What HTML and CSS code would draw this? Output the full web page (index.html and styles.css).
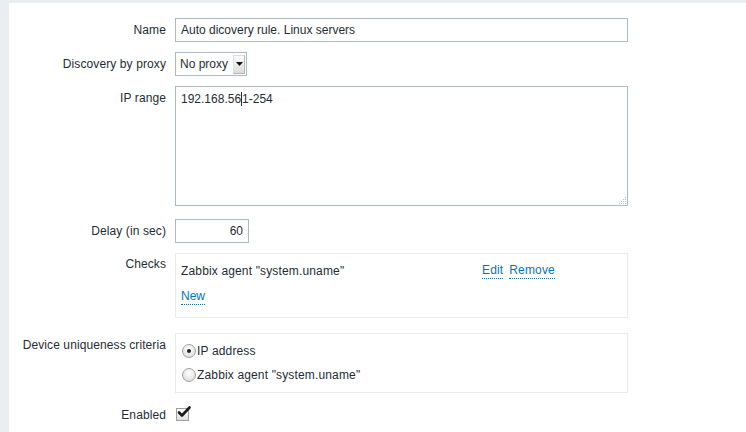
FILE: index.html
```html
<!DOCTYPE html>
<html>
<head>
<meta charset="utf-8">
<link rel="stylesheet" href="styles.css">
</head>
<body>
<div class="page">
  <div class="form">
    <div class="row">
      <div class="label">Name</div>
      <div class="field"><div class="input wide">Auto dicovery rule. Linux servers</div></div>
    </div>
    <div class="row">
      <div class="label">Discovery by proxy</div>
      <div class="field">
        <div class="select"><span class="sel-text">No proxy</span><span class="sel-btn"><svg width="7" height="4" viewBox="0 0 7 4"><path d="M0 0H7L3.5 4Z" fill="#111"/></svg></span></div>
      </div>
    </div>
    <div class="row">
      <div class="label">IP range</div>
      <div class="field">
        <div class="textarea">192.168.56<span class="caret"></span>1-254
          <svg class="grip" width="9" height="9" viewBox="0 0 9 9"><g fill="#b9c2c6"><rect x="7" y="1" width="1" height="1"/><rect x="5" y="3" width="1" height="1"/><rect x="7" y="3" width="1" height="1"/><rect x="3" y="5" width="1" height="1"/><rect x="5" y="5" width="1" height="1"/><rect x="7" y="5" width="1" height="1"/><rect x="1" y="7" width="1" height="1"/><rect x="3" y="7" width="1" height="1"/><rect x="5" y="7" width="1" height="1"/><rect x="7" y="7" width="1" height="1"/></g></svg>
        </div>
      </div>
    </div>
    <div class="row delay-row">
      <div class="label">Delay (in sec)</div>
      <div class="field"><div class="input small">60</div></div>
    </div>
    <div class="row">
      <div class="label checks-label">Checks</div>
      <div class="field">
        <div class="box checks">
          <div class="check-line"><span class="check-name">Zabbix agent "system.uname"</span><a class="link">Edit</a><a class="link">Remove</a></div>
          <div class="check-new"><a class="link">New</a></div>
        </div>
      </div>
    </div>
    <div class="row device-row">
      <div class="label">Device uniqueness criteria</div>
      <div class="field">
        <div class="box radios">
          <div class="radio-line"><span class="radio on"></span>IP address</div>
          <div class="radio-line"><span class="radio"></span>Zabbix agent "system.uname"</div>
        </div>
      </div>
    </div>
    <div class="row">
      <div class="label">Enabled</div>
      <div class="field">
        <span class="checkbox"><svg width="16" height="14" viewBox="0 0 16 14"><path d="M3 7.5 L6 10.5 L13.5 2.5" stroke="#1a1a1a" stroke-width="2.6" fill="none" stroke-linecap="round" stroke-linejoin="round"/></svg></span>
      </div>
    </div>
  </div>
</div>
</body>
</html>
```
FILE: styles.css
```css
html, body {
  margin: 0;
  padding: 0;
}
body {
  background: #ebeef0;
  font-family: "Liberation Sans", Arial, sans-serif;
  font-size: 12px;
  color: #1f2c33;
  width: 746px;
  height: 432px;
  overflow: hidden;
}
.page {
  margin: 3px 0 0 9px;
  background: #ffffff;
  height: 429px;
  padding-top: 15px;
  box-sizing: border-box;
}
.form {
  display: flex;
  flex-direction: column;
  gap: 10px;
}
.row {
  display: grid;
  grid-template-columns: 157px 1fr;
  column-gap: 9px;
}
.delay-row { margin-top: 3px; }
.device-row { margin-top: 5px; }
.label {
  text-align: right;
  line-height: 24px;
  white-space: nowrap;
  letter-spacing: 0.1px;
}
.checks-label { line-height: 22px; }
.field {
  display: flex;
  align-items: flex-start;
}
.input {
  box-sizing: border-box;
  height: 24px;
  line-height: 22px;
  border: 1px solid #acbbc0;
  padding: 0 5px;
  background: #fff;
  white-space: nowrap;
}
.wide { width: 453px; }
.small { width: 74px; text-align: right; }
.select {
  box-sizing: border-box;
  display: inline-flex;
  align-items: center;
  height: 24px;
  width: 72px;
  border: 1px solid #acbbc0;
  padding: 0 1px 0 4px;
  background: #fff;
}
.sel-text { flex: 1; }
.sel-btn {
  box-sizing: border-box;
  width: 12px;
  height: 19px;
  border: 1px solid #b5b5b5;
  border-left-color: #ddd;
  border-top-color: #ddd;
  background: linear-gradient(#fbfbfb, #dcdcdc);
  display: flex;
  align-items: center;
  justify-content: center;
}
.textarea {
  position: relative;
  box-sizing: border-box;
  width: 453px;
  height: 120px;
  border: 1px solid #acbbc0;
  padding: 4px 5px;
  line-height: 16px;
  background: #fff;
}
.caret {
  display: inline-block;
  width: 1px;
  height: 14px;
  background: #1f2c33;
  vertical-align: -3px;
}
.grip {
  position: absolute;
  right: 0;
  bottom: 0;
}
.box {
  box-sizing: border-box;
  width: 453px;
  border: 1px solid #ebebeb;
  background: #fff;
}
.checks {
  height: 65px;
  padding: 9px 5px 0;
}
.check-line {
  display: flex;
  line-height: 16px;
  letter-spacing: 0.15px;
}
.check-name { width: 301px; }
.link {
  color: #0275b8;
  border-bottom: 1px dotted #0275b8;
  line-height: 15px;
  margin-right: 6px;
  cursor: pointer;
}
.check-new {
  margin-top: 10px;
  display: flex;
  line-height: 16px;
}
.radios {
  height: 60px;
  padding: 5px 5px 0 6px;
  letter-spacing: 0.15px;
}
.radio-line {
  display: flex;
  align-items: center;
  height: 24px;
}
.radio {
  box-sizing: border-box;
  width: 14px;
  height: 14px;
  border-radius: 50%;
  border: 1px solid #a2a2a2;
  background: radial-gradient(circle at 50% 35%, #ffffff, #e2e2e2 70%, #cfcfcf);
  margin-right: 1px;
  position: relative;
}
.radio.on::after {
  content: "";
  position: absolute;
  left: 4px;
  top: 4px;
  width: 4px;
  height: 4px;
  border-radius: 50%;
  background: #222;
}
.checkbox {
  position: relative;
  display: inline-block;
  box-sizing: border-box;
  width: 13px;
  height: 13px;
  margin: 5px 0 0 1px;
  border: 1px solid #9e9e9e;
  background: linear-gradient(#ffffff, #dedede);
}
.checkbox svg {
  position: absolute;
  left: -1px;
  top: -4px;
}
```
